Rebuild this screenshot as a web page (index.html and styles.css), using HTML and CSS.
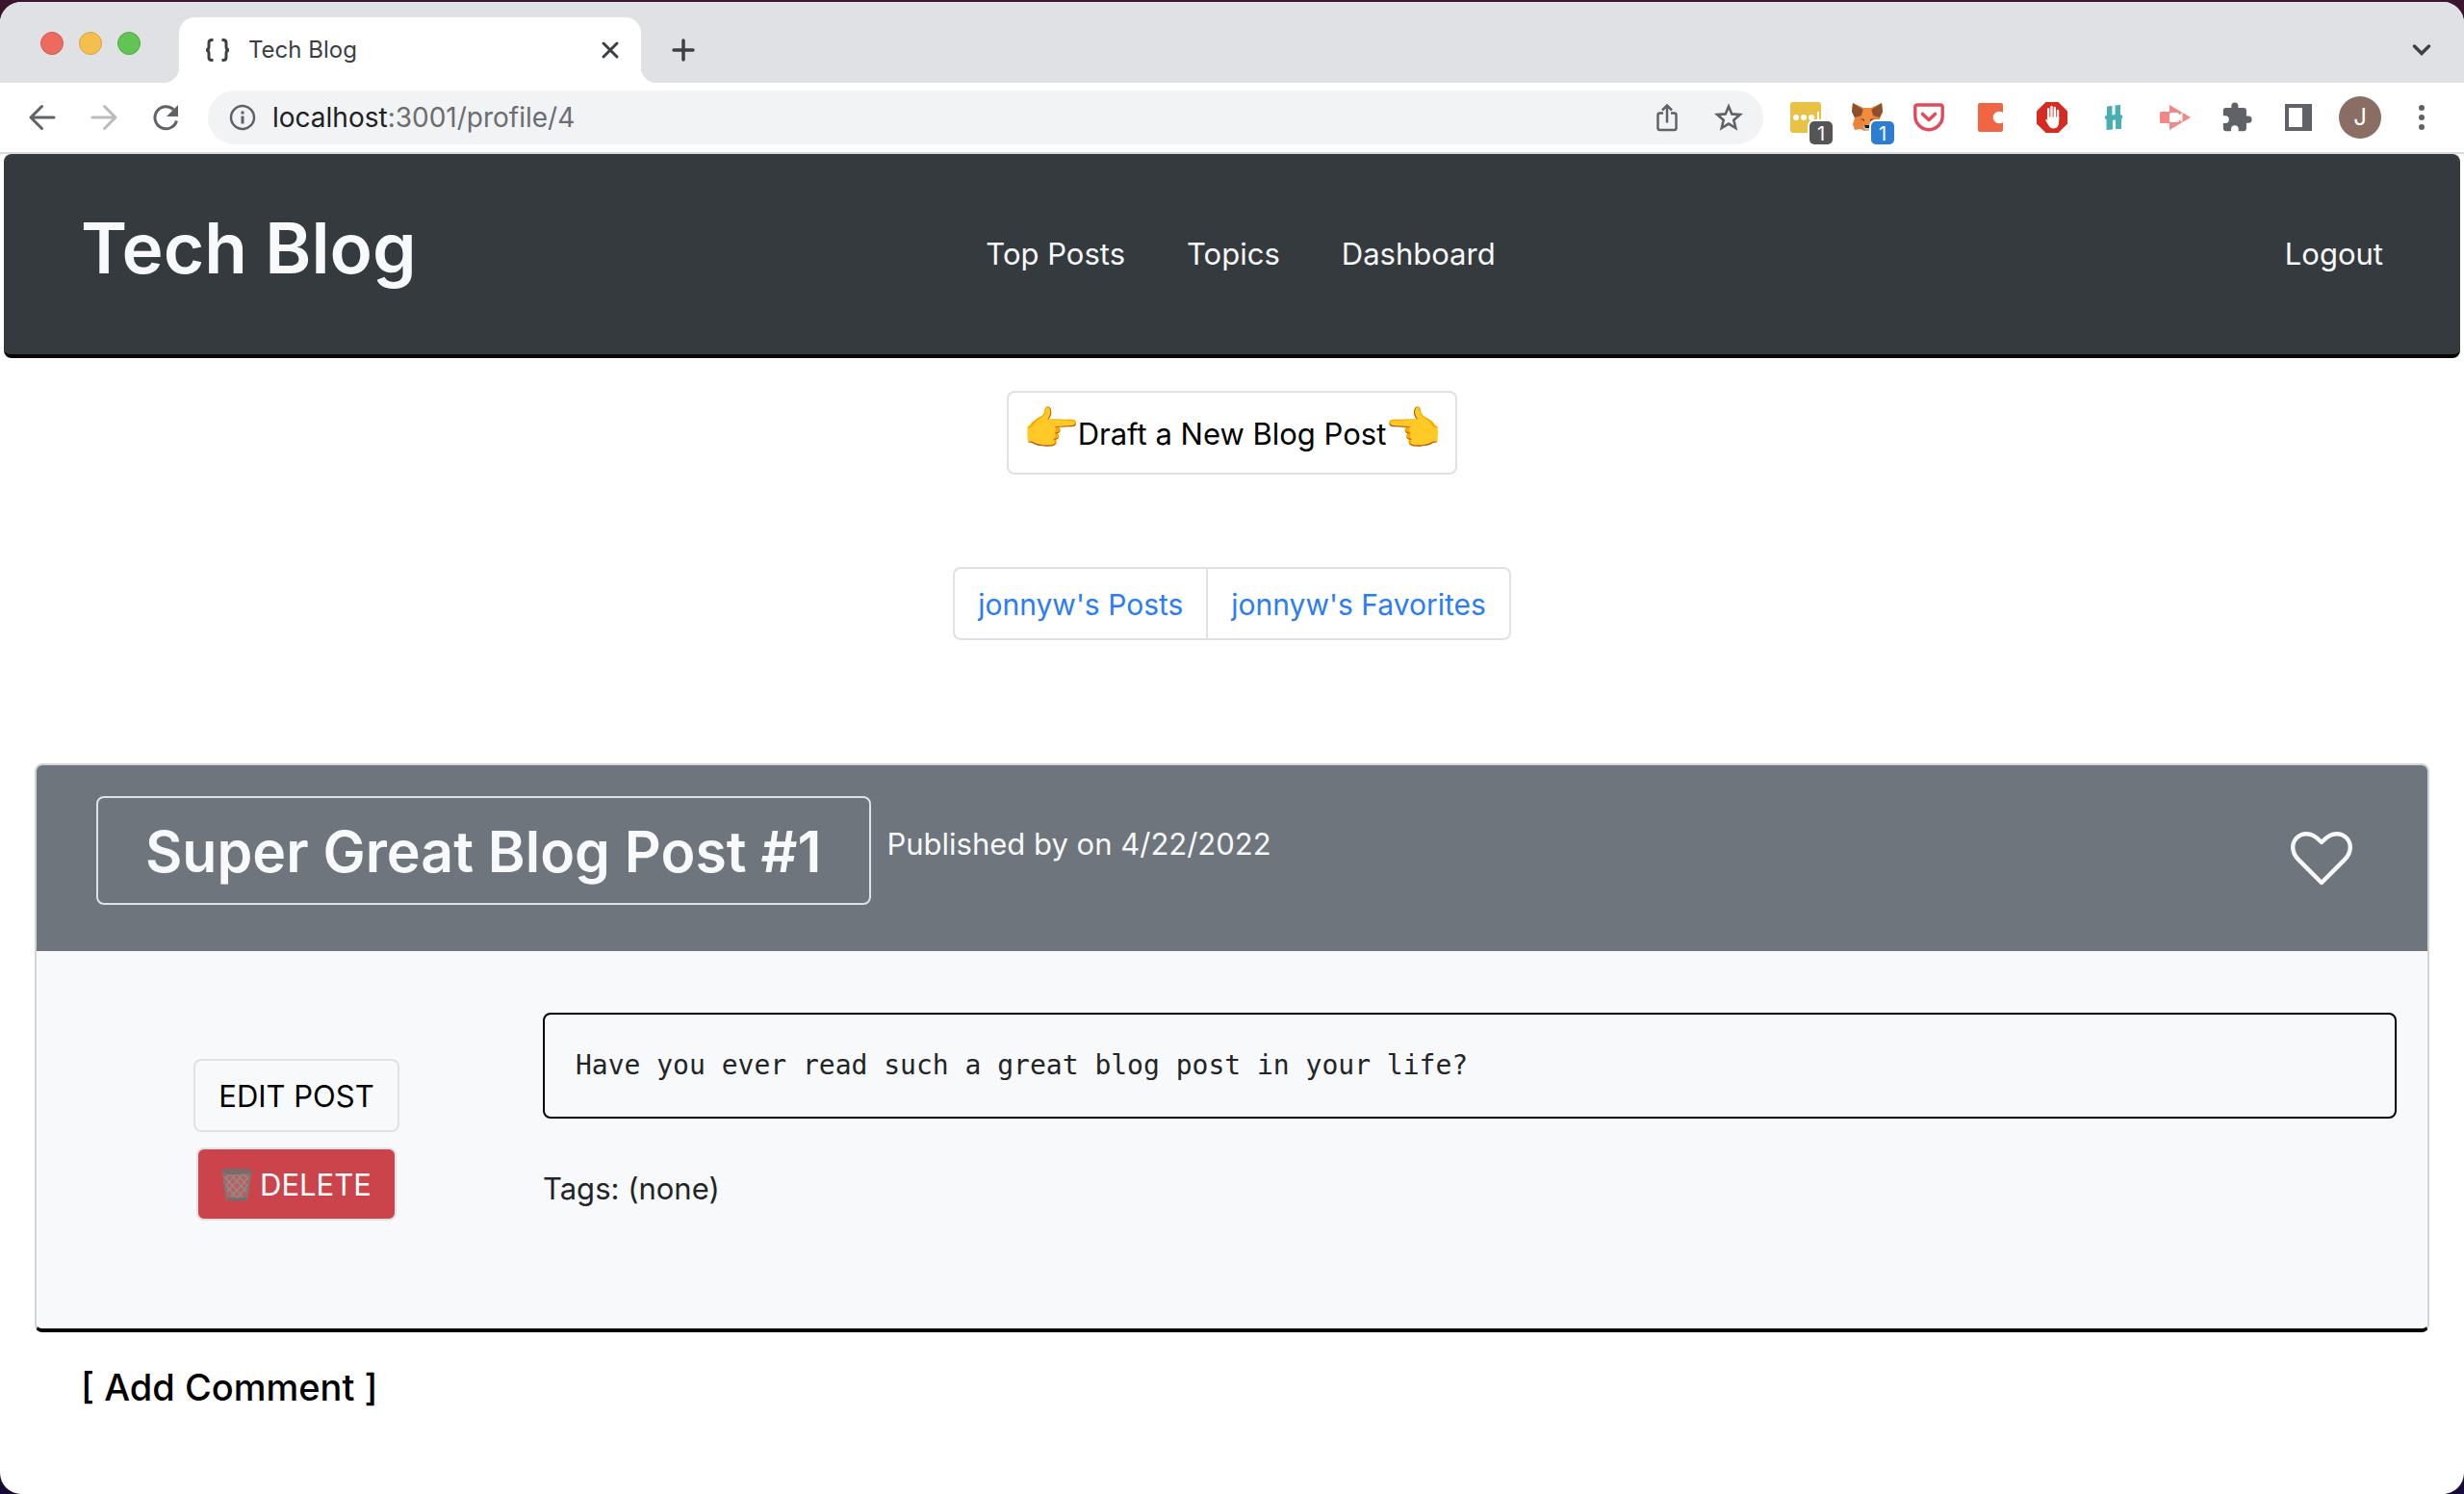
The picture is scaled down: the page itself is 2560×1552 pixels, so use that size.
FILE: index.html
```html
<!DOCTYPE html>
<html lang="en">
<head>
  <meta charset="utf-8">
  <meta name="viewport" content="width=device-width, initial-scale=1">
  <title>Tech Blog</title>
  <link rel="stylesheet" href="styles.css">
</head>
<body>
<div class="window">

  <div class="tabstrip">
    <div class="lights">
      <button class="light light-red" aria-label="Close window"></button>
      <button class="light light-yellow" aria-label="Minimize window"></button>
      <button class="light light-green" aria-label="Zoom window"></button>
    </div>
    <div class="tab">
      <svg width="28" height="24" viewBox="0 0 28 24" fill="none" stroke="#3c4043" stroke-width="3" aria-hidden="true"><path d="M9.500 1.500H8q-3 0-3 3v4Q5 12 2 12q3 0 3 3.500v4q0 3 3 3h1.500M18.500 1.500H20q3 0 3 3v4q0 3.500 3 3.500-3 0-3 3.500v4q0 3-3 3h-1.500"/></svg>
      <span class="tab-title">Tech Blog</span>
      <button class="icon-btn" aria-label="Close tab"><svg width="20" height="20" viewBox="0 0 20 20" stroke="#3c4043" stroke-width="3" stroke-linecap="round"><path d="M3 3l14 14M17 3L3 17"/></svg></button>
    </div>
    <button class="icon-btn new-tab" aria-label="New tab"><svg width="24" height="24" viewBox="0 0 24 24" stroke="#3c4043" stroke-width="3.500" stroke-linecap="round"><path d="M12 2v20M2 12h20"/></svg></button>
    <button class="icon-btn tab-search" aria-label="Search tabs"><svg width="20" height="12" viewBox="0 0 20 12" fill="none" stroke="#3c4043" stroke-width="3.500" stroke-linecap="round"><path d="M2.500 2l7.500 7.500L17.500 2"/></svg></button>
  </div>

  <div class="toolbar">
    <div class="nav-buttons">
      <button class="icon-btn" aria-label="Back"><svg width="32" height="32" viewBox="0 0 32 32" fill="none" stroke="#5f6368" stroke-width="3" stroke-linecap="round" stroke-linejoin="round"><path d="M28 16H5M15.500 4.500L4 16l11.500 11.500"/></svg></button>
      <button class="icon-btn" aria-label="Forward"><svg width="32" height="32" viewBox="0 0 32 32" fill="none" stroke="#b9bbbe" stroke-width="3" stroke-linecap="round" stroke-linejoin="round"><path d="M4 16h23M16.500 4.500L28 16 16.500 27.500"/></svg></button>
      <button class="icon-btn" aria-label="Reload"><svg width="32" height="32" viewBox="0 0 32 32" fill="none" stroke="#5f6368" stroke-width="3"><path d="M27.500 19.500A11.500 11.500 0 1 1 24.500 8"/><path d="M29 3v12H17z" fill="#5f6368" stroke="none"/></svg></button>
    </div>
    <div class="omnibox">
      <svg width="28" height="28" viewBox="0 0 28 28" fill="none" stroke="#5f6368" stroke-width="2.500" aria-hidden="true"><circle cx="14" cy="14" r="12"/><path d="M14 12.500v8M14 7.500v3" stroke-width="3"/></svg>
      <div class="url" role="textbox" aria-label="Address" tabindex="0">localhost<span class="url-path">:3001/profile/4</span></div>
      <button class="icon-btn" aria-label="Share"><svg width="24" height="30" viewBox="0 0 24 30" fill="none" stroke="#5f6368" stroke-width="2.500"><path d="M8 10.500H4.500q-2 0-2 2V26q0 2 2 2h15q2 0 2-2V12.500q0-2-2-2H16M12 20.500V3M7 7.500l5-5 5 5"/></svg></button>
      <button class="icon-btn" aria-label="Bookmark"><svg width="30" height="30" viewBox="0 0 30 30" fill="none" stroke="#5f6368" stroke-width="2.600"><path d="M15 3.500l3.300 7.900 8.500.700-6.500 5.600 2 8.300L15 21.600 7.700 26l2-8.300-6.500-5.600 8.500-.700z"/></svg></button>
    </div>
    <div class="extensions">
      <button class="icon-btn ext" aria-label="Notes"><svg width="32" height="32" viewBox="0 0 32 32"><rect width="32" height="32" rx="3" fill="#e8c244"/><g fill="#fff"><circle cx="6" cy="16" r="3"/><circle cx="14" cy="16" r="3"/><circle cx="22" cy="16" r="3"/><path d="M28 10h2v10h-2z"/></g></svg><span class="badge badge-grey">1</span></button>
      <button class="icon-btn ext" aria-label="Wallet"><svg width="32" height="32" viewBox="0 0 32 32"><path d="M1 1l11 5h8l11-5 1 9-3 7 2 6-2 6-6-1-4 2h-6l-4-2-6 1-2-6 2-6-3-7z" fill="#e8833a"/><path d="M1 1l11 7-2 6-7 2-3-6zM31 1L20 8l2 6 7 2 3-6z" fill="#8a5030"/><path d="M10 15l2-9h8l2 9-2 10h-8z" fill="#f08c3c"/><path d="M11 25h10l-3 5h-4z" fill="#c9bdb3"/><path d="M13 24h6l-1 3h-4z" fill="#1d1d1f"/><path d="M9 17l4 1v2zM23 17l-4 1v2z" fill="#54403a"/></svg><span class="badge badge-blue">1</span></button>
      <button class="icon-btn ext" aria-label="Pocket"><svg width="32" height="30" viewBox="0 0 32 30" fill="none"><path d="M4 2h24q2.200 0 2.200 2.200V13.500a14.200 14.200 0 0 1-28.400 0V4.200Q1.800 2 4 2z" stroke="#de4b5b" stroke-width="3.400"/><path d="M9.500 11.500l6.500 6 6.500-6" stroke="#de4b5b" stroke-width="3.600" stroke-linecap="round" stroke-linejoin="round"/></svg></button>
      <button class="icon-btn ext" aria-label="Capture"><svg width="26" height="30" viewBox="0 0 26 30"><path d="M2 0h22q2 0 2 2v8q-1.500-1.200-4-1.200a6.200 6.200 0 0 0 0 12.400q2.500 0 4-1.200v8q0 2-2 2H2q-2 0-2-2V2q0-2 2-2z" fill="#f06543"/></svg></button>
      <button class="icon-btn ext" aria-label="Ad blocker"><svg width="32" height="32" viewBox="0 0 32 32"><path d="M9.500 0h13L32 9.500v13L22.500 32h-13L0 22.500v-13z" fill="#d52b21"/><g stroke="#fff" stroke-width="2.400" stroke-linecap="round" fill="none"><path d="M12.200 17V7.500M15.500 16V5M18.800 16V6M22 17V9"/></g><path d="M11 15.500h12.200V20q0 7.500-5.700 7.500-3.500 0-5-3L9 18.500q1.300-1.300 2.500.500z" fill="#fff"/></svg></button>
      <button class="icon-btn ext" aria-label="Honey"><svg width="18" height="28" viewBox="0 0 18 28" fill="#48b0b5"><path d="M2 2.500L7.500 2v9.500l3-.5V1.500L16 1v10l2 1v3l-1 .500V26h-6v-9.500l-3 .5v9.500L1.500 27V16L0 15.500v-3l2-.5z"/></svg></button>
      <button class="icon-btn ext" aria-label="Recorder"><svg width="32" height="26" viewBox="0 0 32 26"><path d="M10 0l22 13-22 13v-7H1.500Q0 19 0 17.500v-9Q0 7 1.500 7H10z" fill="#f38786"/><path d="M11.500 8h6q2.500 0 2.500 2.500L23.500 8v10L20 15.500q0 2.500-2.500 2.500h-6Q10 18 10 16.500v-7Q10 8 11.500 8z" fill="#fff"/></svg></button>
      <button class="icon-btn ext" aria-label="Extensions"><svg width="34" height="34" viewBox="0 0 24 24" fill="#5f6368"><path d="M20.500 11H19V7a2 2 0 0 0-2-2h-4V3.500a2.500 2.500 0 0 0-5 0V5H4a2 2 0 0 0-2 2v3.800h1.500a2.700 2.700 0 0 1 0 5.400H2V20a2 2 0 0 0 2 2h3.800v-1.500a2.700 2.700 0 0 1 5.400 0V22H17a2 2 0 0 0 2-2v-4h1.500a2.500 2.500 0 0 0 0-5z"/></svg></button>
      <button class="icon-btn ext" aria-label="Side panel"><svg width="28" height="28" viewBox="0 0 28 28"><path d="M0 0h28v28H0zM4 4v20h14V4z" fill="#5f6368" fill-rule="evenodd"/></svg></button>
      <button class="avatar" aria-label="Profile">J</button>
      <button class="icon-btn ext" aria-label="Menu"><svg width="8" height="28" viewBox="0 0 8 28" fill="#5f6368"><circle cx="4" cy="4" r="3"/><circle cx="4" cy="14" r="3"/><circle cx="4" cy="24" r="3"/></svg></button>
    </div>
  </div>

  <header class="navbar">
    <h1 class="brand">Tech Blog</h1>
    <nav class="nav-links">
      <a href="#top">Top Posts</a>
      <a href="#topics">Topics</a>
      <a href="#dashboard">Dashboard</a>
    </nav>
    <a class="logout" href="#logout">Logout</a>
  </header>

  <main class="page">
    <button class="draft"><span class="hand">👉</span>Draft a New Blog Post<span class="hand">👈</span></button>

    <nav class="filter">
      <a href="#posts">jonnyw's Posts</a>
      <a href="#favorites">jonnyw's Favorites</a>
    </nav>

    <article class="card">
      <div class="card-header">
        <h2 class="post-title">Super Great Blog Post #1</h2>
        <p class="published">Published by on 4/22/2022</p>
        <button class="heart" aria-label="Favorite"><svg width="64" height="64" viewBox="0 0 16 16" fill="none" stroke="#f8f9fa" stroke-width="1.100" stroke-linejoin="round"><path d="M8 14.500L2.100 8.600C.900 7.400.550 6.600.550 5.300A3.500 3.500 0 0 1 4.050 1.800C5.400 1.800 6.300 2.300 8 4 9.700 2.300 10.600 1.800 11.950 1.800A3.500 3.500 0 0 1 15.450 5.300C15.450 6.600 15.100 7.400 13.900 8.600z"/></svg></button>
      </div>
      <div class="card-body">
        <div class="actions">
          <button class="btn">EDIT POST</button>
          <button class="btn btn-danger"><svg width="32" height="34" viewBox="0 0 32 34" fill="none" aria-hidden="true"><path d="M2 4l4 28q10 2 20 0l4-28z" fill="#b8605f"/><path d="M3 8l21 24M3 15l14 17M8 4l19 21M15 4l13 15M22 4l8 9M29 8L8 32M29 16L15 32M24 4L5 25M17 4L4 18M10 4l-7 8" stroke="#958a88" stroke-width="1.500"/><path d="M2 4l4 28M30 4l-4 28" stroke="#7d7b7a" stroke-width="2"/><ellipse cx="16" cy="3" rx="15" ry="2" fill="#8b6463" stroke="#6d7073" stroke-width="2"/><path d="M6 31q10 2 20 0" stroke="#6d7073" stroke-width="3"/></svg>DELETE</button>
        </div>
        <div class="content">
          <pre class="post-text">Have you ever read such a great blog post in your life?</pre>
          <p class="tags">Tags: (none)</p>
        </div>
      </div>
    </article>

    <button class="add-comment">[ Add Comment ]</button>
  </main>
</div>
</body>
</html>
```
FILE: styles.css
```css
* { box-sizing: border-box; }

body {
  margin: 0;
  min-height: 100vh;
  padding-top: 2px;
  background: linear-gradient(#3a1530 0, #2a1440 50%, #170a36 100%);
  color: #212529;
  font: 31px/48px Inter, "Liberation Sans", sans-serif;
}

h1, h2, p, pre { margin: 0; }
a { text-decoration: none; }
svg { display: block; flex: none; }
button { font: inherit; color: inherit; cursor: pointer; }

.window {
  min-height: calc(100vh - 2px);
  background: #fff;
  border-radius: 22px;
  overflow: hidden;
}

.icon-btn {
  display: flex;
  align-items: center;
  justify-content: center;
  padding: 0;
  border: 0;
  background: none;
}

/* Tab strip */
.tabstrip {
  display: flex;
  align-items: flex-end;
  height: 84px;
  padding: 0 34px 0 42px;
  background: #dfe1e5;
}
.lights {
  display: flex;
  gap: 16px;
  width: 144px;
  padding-bottom: 29px;
}
.light {
  width: 24px;
  height: 24px;
  padding: 0;
  border: 1px solid;
  border-radius: 50%;
}
.light-red { background: #ed6a5e; border-color: #d5584d; }
.light-yellow { background: #f5bf4f; border-color: #d9a33c; }
.light-green { background: #61c454; border-color: #4fa93f; }

.tab {
  position: relative;
  display: flex;
  align-items: center;
  width: 480px;
  height: 68px;
  padding: 0 22px 0 26px;
  border-radius: 16px 16px 0 0;
  background: #fff;
  color: #3c4043;
  font-size: 24px;
}
.tab::before, .tab::after {
  content: "";
  position: absolute;
  bottom: 0;
  width: 16px;
  height: 16px;
}
.tab::before { left: -16px; background: radial-gradient(circle at 0 0, transparent 16px, #fff 16px); }
.tab::after { right: -16px; background: radial-gradient(circle at 100% 0, transparent 16px, #fff 16px); }
.tab-title { flex: 1; padding-left: 18px; }
.new-tab { width: 88px; height: 68px; }
.tab-search { height: 68px; margin-left: auto; }

/* Toolbar */
.toolbar {
  display: flex;
  align-items: center;
  height: 74px;
  padding: 0 12px 0 28px;
  border-bottom: 2px solid #d9dcdc;
}
.nav-buttons {
  display: flex;
  gap: 32px;
  width: 188px;
}
.omnibox {
  display: flex;
  flex: 1;
  align-items: center;
  height: 56px;
  padding: 0 21px 0 22px;
  border-radius: 28px;
  background: #f1f3f4;
  color: #202124;
  font-size: 28px;
}
.url { flex: 1; padding-left: 17px; }
.url-path { color: #6a6d71; }
.omnibox .icon-btn + .icon-btn { margin-left: 37px; }

.extensions {
  display: flex;
  align-items: center;
  margin-left: 12px;
}
.ext {
  position: relative;
  width: 64px;
  height: 56px;
}
.badge {
  position: absolute;
  right: 4px;
  bottom: 0;
  width: 24px;
  height: 24px;
  border-radius: 5px;
  box-shadow: 0 0 0 2px #fff;
  color: #fff;
  font-size: 20px;
  line-height: 26px;
  text-align: center;
}
.badge-grey { background: #555; }
.badge-blue { background: #2f7dd1; }
.avatar {
  width: 44px;
  height: 44px;
  margin: 0 10px;
  padding: 0;
  border: 0;
  border-radius: 50%;
  background: #8a6e63;
  color: #fff;
  font-size: 24px;
  line-height: 44px;
}

/* Site header */
.navbar {
  display: grid;
  grid-template-columns: 1fr auto 1fr;
  align-items: center;
  margin: 0 4px;
  padding: 50px 80px 62px;
  border-bottom: 4px solid #0a0406;
  border-radius: 8px;
  background: #353a3e;
  color: #f8f9fa;
}
.navbar a { color: #f8f9fa; }
.brand {
  font-size: 73px;
  font-weight: 600;
  line-height: 96px;
}
.nav-links {
  display: flex;
  gap: 64px;
  padding: 12px 0 0 18px;
}
.logout { padding-top: 12px; justify-self: end; }

/* Page */
.page {
  display: flex;
  flex-direction: column;
  align-items: center;
  padding: 34px 36px 64px;
}
.draft {
  display: flex;
  align-items: center;
  padding: 19px 14px 16px;
  border: 2px solid #dee2e6;
  border-radius: 8px;
  background: #fff;
  color: #000;
}
.hand {
  width: 58px;
  padding-bottom: 12px;
  font-size: 48px;
  line-height: 32px;
}
.hand:last-child { direction: rtl; }

.filter {
  display: flex;
  margin-top: 96px;
  font-size: 30px;
}
.filter a {
  padding: 13px 24px 11px;
  border: 2px solid #dee2e6;
  border-radius: 8px;
  color: #2a7df8;
}
.filter a:first-child {
  border-right: 0;
  border-radius: 8px 0 0 8px;
}
.filter a:last-child { border-radius: 0 8px 8px 0; }

.card {
  align-self: stretch;
  margin-top: 128px;
  border: 2px solid #d3d4d5;
  border-bottom: 4px solid #000;
  border-radius: 8px;
  background: #f8f9fa;
  overflow: hidden;
}
.card-header {
  display: flex;
  align-items: flex-start;
  gap: 16px;
  padding: 32px 78px 48px 62px;
  background: #6e757c;
  color: #f8f9fa;
}
.post-title {
  padding: 18px 50px 16px 49px;
  border: 2px solid #dee2e6;
  border-radius: 8px;
  font-size: 59px;
  font-weight: 600;
  line-height: 75px;
}
.published { padding-top: 26px; }
.heart {
  margin: 32px 0 0 auto;
  padding: 0;
  border: 0;
  background: none;
}

.card-body {
  display: grid;
  grid-template-columns: 21% 1fr;
  padding: 64px 32px 112px 14px;
}
.actions {
  display: flex;
  flex-direction: column;
  align-items: center;
  gap: 16px;
  padding-top: 48px;
}
.btn {
  display: flex;
  align-items: center;
  gap: 8px;
  padding: 13px 24px 11px;
  border: 2px solid #dee2e6;
  border-radius: 8px;
  background: #f8f9fa;
  color: #000;
}
.btn-danger {
  background: #cc444b;
  color: #fff;
}
.post-text {
  padding: 32px;
  border: 2px solid #000;
  border-radius: 8px;
  font: 28px/42px "DejaVu Sans Mono", monospace;
  white-space: pre-wrap;
}
.tags { margin-top: 49px; }

.add-comment {
  align-self: flex-start;
  margin: 33px 0 0 48px;
  padding: 0;
  border: 0;
  background: none;
  color: #000;
  font-size: 38px;
  font-weight: 500;
}
```
